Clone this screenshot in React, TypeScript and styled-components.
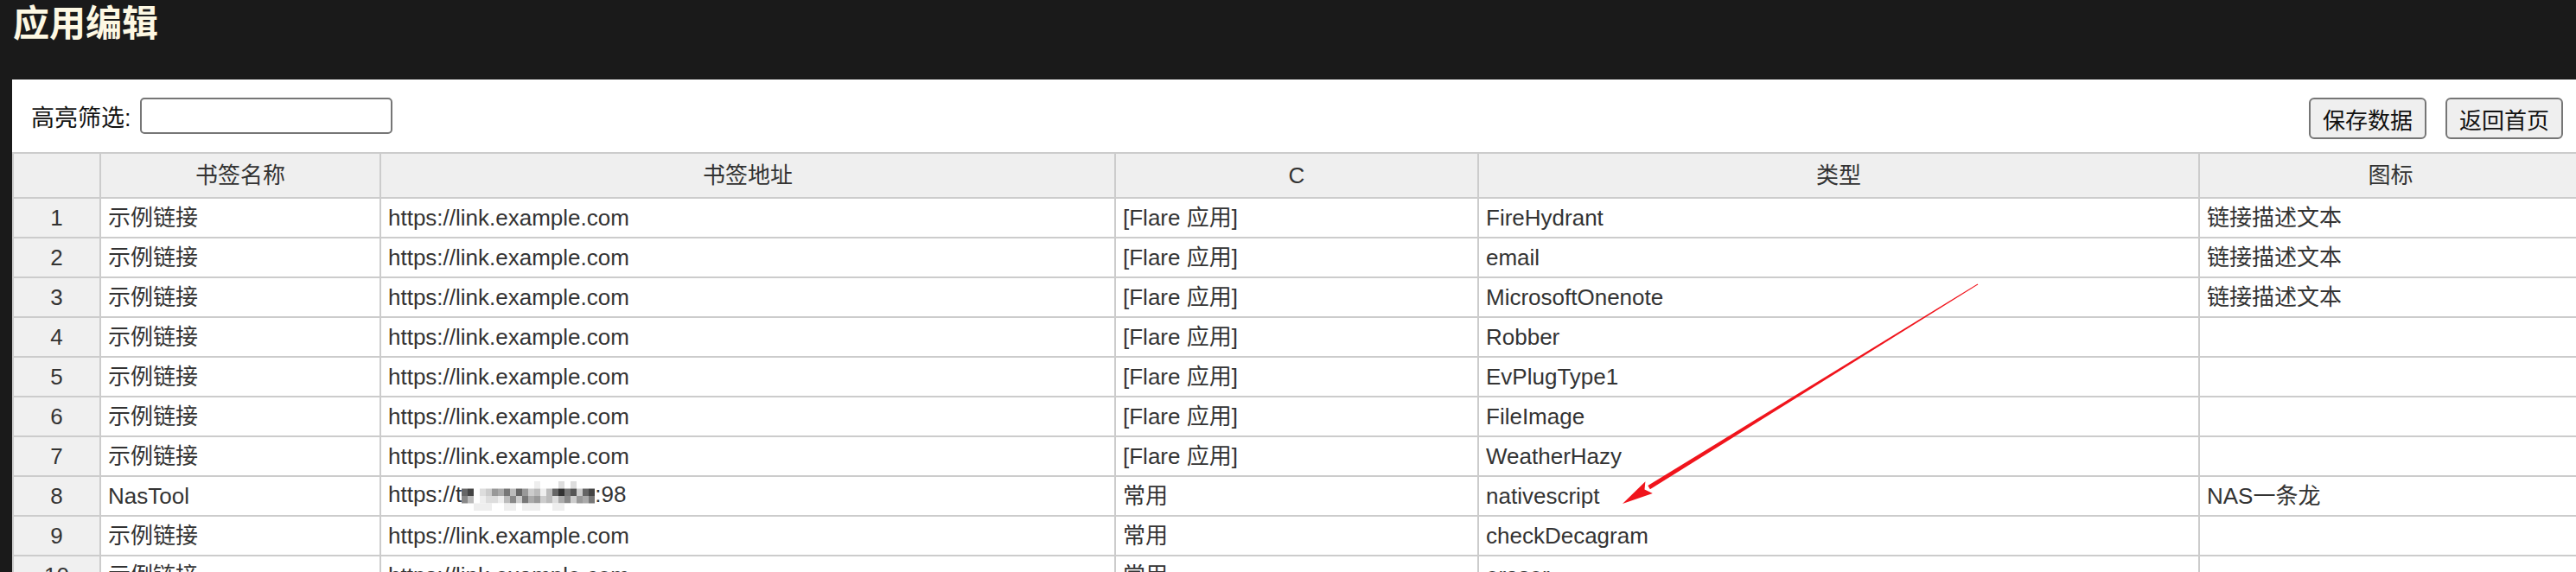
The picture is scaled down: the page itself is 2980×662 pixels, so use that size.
import React from 'react';
import styled, { createGlobalStyle } from 'styled-components';

const GlobalStyle = createGlobalStyle`
    html, body {
        margin: 0;
        padding: 0;
        background: #1a1a1a;
        overflow: hidden;
    }
    body {
        font-family: 'Liberation Sans', 'Noto Sans CJK SC', sans-serif;
    }
`;

const Page = styled.div`
    position: relative;
    width: 2980px;
    height: 662px;
    overflow: hidden;
`;

const Header = styled.header`
    height: 92px;
    box-sizing: border-box;
    padding: 7px 15px 0;
`;

const Title = styled.h1`
    margin: 0;
    font-size: 42px;
    line-height: 42px;
    font-weight: 700;
    color: #fdf8e3;
`;

const Panel = styled.main`
    margin-left: 14px;
    width: 2972px;
    background: #fff;
    min-height: 570px;
`;

const Toolbar = styled.div`
    display: flex;
    justify-content: space-between;
    align-items: flex-start;
    padding: 21px 21px 15px 22px;
`;

const FilterGroup = styled.label`
    display: flex;
    align-items: center;
    gap: 10px;
    height: 42px;
    font-size: 27px;
    color: #111;
`;

const FilterInput = styled.input`
    width: 292px;
    height: 42px;
    box-sizing: border-box;
    border: 2px solid #767676;
    border-radius: 5px;
    background: #fff;
    outline: none;
`;

const ButtonGroup = styled.div`
    display: flex;
    gap: 22px;
`;

const Button = styled.button`
    height: 48px;
    box-sizing: border-box;
    padding: 0 14px;
    border: 2px solid #767676;
    border-radius: 6px;
    background: #efefef;
    font-family: inherit;
    font-size: 26px;
    color: #111;
`;

const Table = styled.table`
    width: 100%;
    table-layout: fixed;
    border-collapse: collapse;
    font-size: 26px;
    line-height: 30px;
    color: #333;
`;

const HeadCell = styled.th`
    height: 50px;
    padding: 0 8px;
    border: 2px solid #ccc;
    background: #efefef;
    font-weight: 400;
    text-align: center;
    color: #333;
`;

const Cell = styled.td<{ $index?: boolean }>`
    height: 44px;
    padding: 0 8px;
    border: 2px solid #ccc;
    background: ${(p) => (p.$index ? '#f0f0f0' : '#fff')};
    text-align: ${(p) => (p.$index ? 'center' : 'left')};
    white-space: nowrap;
    overflow: hidden;
`;

const Mosaic = styled.svg`
    vertical-align: -10px;
`;

const Arrow = styled.svg`
    position: absolute;
    left: 0;
    top: 0;
    pointer-events: none;
`;

const columns = [
    { title: '', width: 101 },
    { title: '书签名称', width: 324 },
    { title: '书签地址', width: 850 },
    { title: 'C', width: 420 },
    { title: '类型', width: 834 },
    { title: '图标', width: 443 },
];

const url = 'https://link.example.com';
const rows = [
    ['示例链接', url, '[Flare 应用]', 'FireHydrant', '链接描述文本'],
    ['示例链接', url, '[Flare 应用]', 'email', '链接描述文本'],
    ['示例链接', url, '[Flare 应用]', 'MicrosoftOnenote', '链接描述文本'],
    ['示例链接', url, '[Flare 应用]', 'Robber', ''],
    ['示例链接', url, '[Flare 应用]', 'EvPlugType1', ''],
    ['示例链接', url, '[Flare 应用]', 'FileImage', ''],
    ['示例链接', url, '[Flare 应用]', 'WeatherHazy', ''],
    ['NasTool', 'masked', '常用', 'nativescript', 'NAS一条龙'],
    ['示例链接', url, '常用', 'checkDecagram', ''],
    ['示例链接', url, '常用', 'eraser', ''],
];

// pixelated part of the hidden address, one char per block
const mosaicRows = [
    '............e...d.d...',
    '64.dc9a7b69cbeb6375c64',
    '8b.edd b8c7a9cbda8c9a7'.replace(' ', 'e'),
    '..eeeffeefeeeffeeff...',
];

const MaskedUrl = () => (
    <>
        https://t
        <Mosaic width="154" height="34" viewBox="0 0 154 34">
            {mosaicRows.map((r, y) =>
                r.split('').map((c, x) =>
                    c === '.' ? null : (
                        <rect
                            key={`${x}-${y}`}
                            x={x * 7}
                            y={y * 8.5}
                            width="7"
                            height="8.5"
                            fill={`#${c}${c}${c}`}
                        />
                    )
                )
            )}
        </Mosaic>
        :98
    </>
);

export default function App() {
    return (
        <Page>
            <GlobalStyle />
            <Header>
                <Title>应用编辑</Title>
            </Header>
            <Panel>
                <Toolbar>
                    <FilterGroup>
                        高亮筛选:
                        <FilterInput type="text" />
                    </FilterGroup>
                    <ButtonGroup>
                        <Button>保存数据</Button>
                        <Button>返回首页</Button>
                    </ButtonGroup>
                </Toolbar>
                <Table>
                    <colgroup>
                        {columns.map((c, i) => (
                            <col key={i} style={{ width: c.width }} />
                        ))}
                    </colgroup>
                    <thead>
                        <tr>
                            {columns.map((c, i) => (
                                <HeadCell key={i}>{c.title}</HeadCell>
                            ))}
                        </tr>
                    </thead>
                    <tbody>
                        {rows.map((r, i) => (
                            <tr key={i}>
                                <Cell $index>{i + 1}</Cell>
                                {r.map((v, j) => (
                                    <Cell key={j}>
                                        {v === 'masked' ? <MaskedUrl /> : v}
                                    </Cell>
                                ))}
                            </tr>
                        ))}
                    </tbody>
                </Table>
            </Panel>
            <Arrow width="2980" height="662" viewBox="0 0 2980 662">
                <polygon
                    points="2288.3,329.4 2287.7,328.6 1906.3,562.0 1908.9,566.2"
                    fill="#f0141c"
                />
                <polygon
                    points="1877,583 1903.4,557.3 1902.5,566.5 1911.8,570.9"
                    fill="#f0141c"
                />
            </Arrow>
        </Page>
    );
}
